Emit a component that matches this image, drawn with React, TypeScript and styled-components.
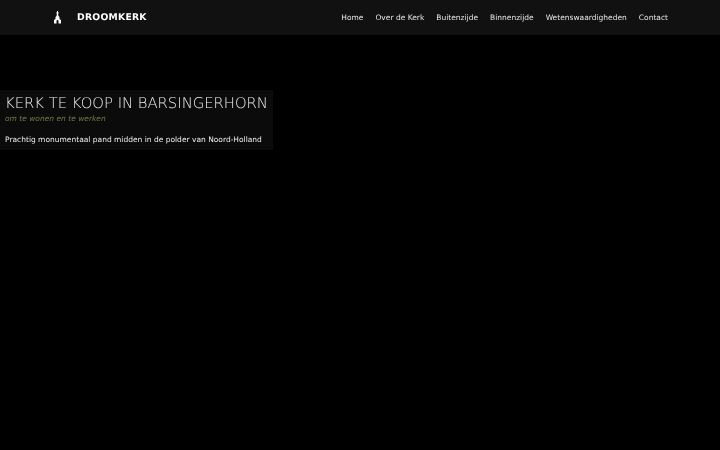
import styled, { createGlobalStyle } from "styled-components";

const GlobalStyle = createGlobalStyle`
  html, body {
    margin: 0;
    background: #000;
    font-family: "DejaVu Sans", sans-serif;
    text-rendering: geometricPrecision;
  }
`;

const Page = styled.div`
  width: 720px;
  height: 450px;
  overflow: hidden;
  background: #000;
  will-change: transform;
`;

const Header = styled.header`
  height: 35px;
  box-sizing: border-box;
  padding: 0 52px 1px;
  display: flex;
  align-items: center;
  justify-content: space-between;
  background: #111;
`;

const Brand = styled.a`
  display: flex;
  align-items: center;
  gap: 14px;
  color: #fff;
  font-size: 9.25px;
  font-weight: 700;
  letter-spacing: 0.25px;
  text-decoration: none;
`;

const Nav = styled.nav`
  display: flex;
  gap: 12px;
`;

const NavLink = styled.a`
  color: #e6e6e6;
  font-size: 7.5px;
  text-decoration: none;
`;

const Hero = styled.section`
  width: 273px;
  height: 60px;
  box-sizing: border-box;
  margin-top: 55px;
  padding: 4px 5px 0;
  background: #0b0b0b;
`;

const Title = styled.h1`
  margin: 0;
  color: #eee;
  font-size: 14.8px;
  font-weight: 200;
  line-height: 19px;
  white-space: nowrap;
`;

const Subtitle = styled.div`
  color: #77784a;
  font-size: 7.5px;
  font-style: italic;
  line-height: 11px;
`;

const Intro = styled.p`
  margin: 10px 0 0;
  color: #eee;
  font-size: 7.5px;
  line-height: 11px;
  white-space: nowrap;
`;

function ChurchIcon() {
  return (
    <svg width="11" height="13" viewBox="0 0 11 13" fill="#fff">
      <path d="M5 0h1v1.500h.8v1H6l.5 2.500 1 1V8l1.500 1v3.500H6.500V10a1 1 0 0 0-2 0v2.500H2V9l1.500-1V6l1-1L5 2.500h-.8v-1H5z" />
    </svg>
  );
}

const links = ["Home", "Over de Kerk", "Buitenzijde", "Binnenzijde", "Wetenswaardigheden", "Contact"];

export default function App() {
  return (
    <Page>
      <GlobalStyle />
      <Header>
        <Brand href="#">
          <ChurchIcon />
          DROOMKERK
        </Brand>
        <Nav>
          {links.map((link) => (
            <NavLink href="#" key={link}>
              {link}
            </NavLink>
          ))}
        </Nav>
      </Header>
      <Hero>
        <Title>KERK TE KOOP IN BARSINGERHORN</Title>
        <Subtitle>om te wonen en te werken</Subtitle>
        <Intro>Prachtig monumentaal pand midden in de polder van Noord-Holland</Intro>
      </Hero>
    </Page>
  );
}
